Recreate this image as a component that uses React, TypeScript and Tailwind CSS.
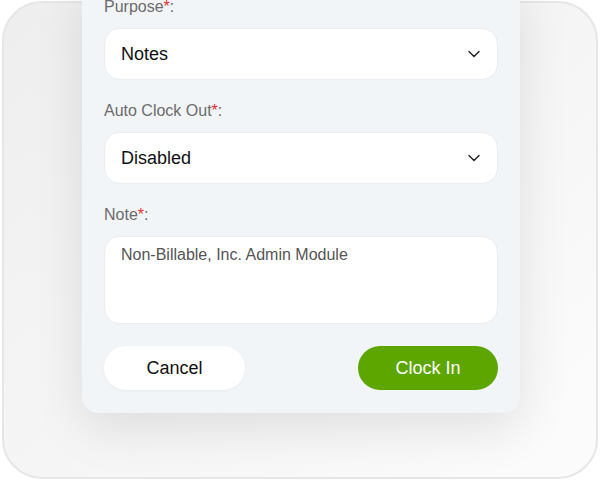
import React from 'react';
import { ChevronDown } from 'lucide-react';

const Label = ({ text }: { text: string }) => (
  <div className="text-[16px] leading-6 text-[#6b6b6b] mb-[9px]">
    {text}
    <span className="text-[#ef2b2b]">*</span>:
  </div>
);

const Select = ({ value }: { value: string }) => (
  <div className="h-[52px] rounded-[16px] bg-white border border-[#e9edf1] flex items-center justify-between pl-[16px] pr-[13px]">
    <span className="text-[18px] text-[#111]">{value}</span>
    <ChevronDown className="w-[20px] h-[20px] text-[#222]" strokeWidth={1.7} />
  </div>
);

export default function App() {
  return (
    <div className="h-[480px] w-[600px] bg-white p-[1px] pl-[2px] pr-[2px]" style={{ fontFamily: '"Liberation Sans", Arial, sans-serif' }}>
      <div className="h-full rounded-[40px] border-[2px] border-[#e6e6e6] bg-gradient-to-br from-[#eeeeee] via-[#f5f5f5] to-[#fcfcfc] flex justify-center">
        <div className="w-[438px] ml-[2px] self-start -mt-[23px] pt-[15px] px-[22px] pb-[23px] bg-[#f2f5f8] rounded-b-[16px] shadow-[0_16px_50px_rgba(0,0,0,0.1)]">
          <Label text="Purpose" />
          <Select value="Notes" />
          <div className="mt-[19px]">
            <Label text="Auto Clock Out" />
            <Select value="Disabled" />
          </div>
          <div className="mt-[19px]">
            <Label text="Note" />
            <div className="h-[88px] rounded-[16px] bg-white border border-[#e9edf1] pl-[16px] pt-[6px] text-[16px] leading-6 text-[#555]">
              Non-Billable, Inc. Admin Module
            </div>
          </div>
          <div className="mt-[22px] flex justify-between">
            <button className="w-[141px] h-[44px] rounded-full bg-white text-[18px] text-[#111] shadow-[0_1px_3px_rgba(0,0,0,0.04)]">
              Cancel
            </button>
            <button className="w-[140px] h-[44px] rounded-full bg-[#5da600] text-[18px] text-white">
              Clock In
            </button>
          </div>
        </div>
      </div>
    </div>
  );
}
